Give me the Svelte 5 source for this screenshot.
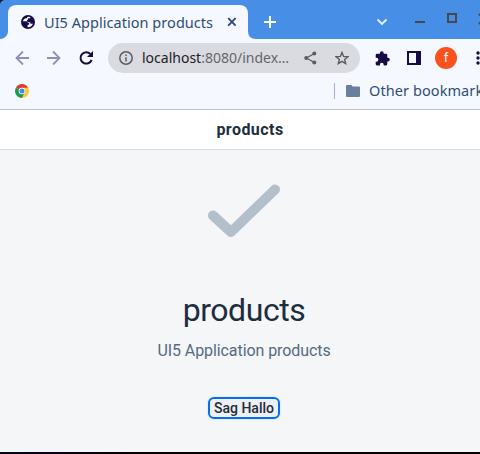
<script>
  const title = 'UI5 Application products';
  const name = 'products';
</script>

<div class="window">
  <div class="tabstrip">
    <div class="tab">
      <svg class="globe" width="14" height="14" viewBox="0 0 14 14">
        <circle cx="7" cy="7" r="7" fill="#180a45" />
        <path d="M1.800 6.200h3.400q1.500 0 1.700 1.500h1.300v2.100H6.600v2.400c2.500.2 4.600-1.300 5.300-3.500H10q-.8 0-.8-1.500-3.100.3-3.400-1.100-.1-1.200 1.300-1.500V3.200h2.100V2.100Q7.600 1.500 6.200 1.900V3.200H4.400Q2.400 4 1.800 6.200Z" fill="#f5f9ff" />
      </svg>
      <span class="tabtitle">{title}</span>
      <svg class="close" width="10" height="10" viewBox="0 0 10 10"><path d="M1.200 1.200l7.400 7.400M8.600 1.200L1.200 8.600" stroke="#2a4a73" stroke-width="1.900" /></svg>
    </div>
    <svg class="flare" width="8" height="8" viewBox="0 0 8 8"><path d="M0 0Q0 8 8 8H0Z" fill="#f5f9ff" /></svg>
    <svg class="plus" width="12" height="12" viewBox="0 0 12 12"><path d="M6 0v12M0 6h12" stroke="#fff" stroke-width="2" /></svg>
    <svg class="chev" width="12" height="8" viewBox="0 0 12 8"><path d="M1.500 1.500L6 6l4.500-4.500" fill="none" stroke="#e9f2ff" stroke-width="1.800" /></svg>
    <svg class="controls" width="65" height="12" viewBox="0 0 65 12" fill="none" stroke="#48484a" stroke-width="2">
      <path d="M0 9h10M64 1l10 10M64 11L74 1" /><rect x="33" y="1" width="8" height="8" />
    </svg>
  </div>

  <div class="toolbar">
    <svg class="nav" width="84" height="16" viewBox="0 0 84 16" fill="none" stroke="#918fb3" stroke-width="1.800">
      <path d="M14 8H1.500M8 1.500L1.500 8 8 14.500M32 8h12.500M38 1.500L44.500 8 38 14.500" />
      <g stroke="#180a45" stroke-width="2"><path d="M75.500 4.100A5.700 5.700 0 1 0 76.600 9.800" /></g>
      <path d="M78 1v6h-6z" fill="#180a45" stroke="none" />
    </svg>
    <div class="address">
      <svg width="14" height="14" viewBox="0 0 14 14"><circle cx="7" cy="7" r="6.200" fill="none" stroke="#5b5c60" stroke-width="1.500" /><path d="M7 6.200v4.300M7 3.400v1.500" stroke="#5b5c60" stroke-width="1.500" /></svg>
      <span class="url"><b>localhost</b>:8080/index…</span>
      <svg class="share" width="13" height="14" viewBox="0 0 13 14"><path d="M10.500 2.500L2.300 7l8.200 4.500" fill="none" stroke="#5b5c60" stroke-width="1.300" /><g fill="#5b5c60"><circle cx="10.300" cy="2.500" r="2" /><circle cx="2.200" cy="7" r="2" /><circle cx="10.300" cy="11.500" r="2" /></g></svg>
      <svg class="star" width="14" height="14" viewBox="0 0 14 14"><path d="M7 1.400l1.600 4 4.300.3-3.300 2.700 1.100 4.200L7 10.300l-3.700 2.300 1.100-4.200L1.100 5.700l4.300-.3Z" fill="none" stroke="#5b5c60" stroke-width="1.400" /></svg>
    </div>
    <svg class="puzzle" width="15" height="15" viewBox="0 0 15 15"><path d="M2 2.800h2.900V2.200a1.900 1.900 0 0 1 3.800 0v.6H11q1.300 0 1.300 1.300v2.600h.6a1.900 1.900 0 0 1 0 3.800h-.6v2.600q0 1.300-1.300 1.300H8.700v-.7a1.900 1.900 0 0 0-3.800 0v.7H2q-1.300 0-1.300-1.300v-2.400h.7a1.900 1.900 0 0 0 0-3.900H.7V4.100Q.7 2.800 2 2.800z" fill="#180a45" /></svg>
    <svg class="panel" width="14" height="14" viewBox="0 0 14 14"><path d="M0 0h14v14H0zM2 2v10h7V2z" fill="#180a45" fill-rule="evenodd" /></svg>
    <div class="avatar">f</div>
    <svg class="dots" width="4" height="14" viewBox="0 0 4 14" fill="#180a45"><circle cx="2" cy="2" r="1.700" /><circle cx="2" cy="7" r="1.700" /><circle cx="2" cy="12" r="1.700" /></svg>
  </div>

  <div class="bookmarks">
    <svg class="chrome" width="14" height="14" viewBox="0 0 14 14">
      <path d="M7 7L.94 3.500A7 7 0 0 1 13.060 3.500Z" fill="#e3392c" />
      <path d="M7 7L.94 3.500A7 7 0 0 0 7 14l3-5.300Z" fill="#189c4c" />
      <path d="M7 3.800h6.200A7 7 0 0 1 7 14l2.900-5.500Z" fill="#fdcb2e" />
      <circle cx="7" cy="7" r="3.300" fill="#fff" /><circle cx="7" cy="7" r="2.500" fill="#4385f4" />
    </svg>
    <div class="other">
      <svg width="14" height="12" viewBox="0 0 14 12"><path d="M1 0h4.300l1.500 1.500H13q1 0 1 1V11q0 1-1 1H1q-1 0-1-1V1q0-1 1-1z" fill="#68809e" /></svg>
      <span>Other bookmarks</span>
    </div>
  </div>

  <header>{name}</header>
  <main>
    <svg class="check" width="74" height="56" viewBox="0 0 74 56"><path d="M6 32.500L24 49 68 6.500" fill="none" stroke="#b3bfcb" stroke-width="10" stroke-linecap="round" stroke-linejoin="round" /></svg>
    <h1>{name}</h1>
    <p>{title}</p>
    <button>Sag Hallo</button>
  </main>
  <div class="desktop"></div>
</div>

<style>
  :global(body) { overflow: hidden; background: #f4f6f8; }
  svg { display: block; flex: none; }
  .window { width: 480px; height: 454px; overflow: hidden; display: flex; flex-direction: column; font-family: Roboto, "Liberation Sans", sans-serif; }
  .window > * { flex: none; box-sizing: border-box; }
  .tabstrip { height: 39px; display: flex; align-items: flex-end; background: #478fe6; padding-left: 8px; position: relative; }
  .tabstrip::before { content: ""; position: absolute; left: 0; bottom: 0; width: 8px; height: 8px; background: radial-gradient(circle at 0 0, #478fe6 7.500px, #f5f9ff 8.500px); }
  .tabstrip::after { content: ""; position: absolute; left: 0; top: 0; width: 5px; height: 5px; background: radial-gradient(circle at 5px 5px, transparent 4.500px, #111d31 5.500px); }
  .tab { width: 240px; height: 34px; box-sizing: border-box; border-radius: 8px 8px 0 0; background: #f5f9ff; display: flex; align-items: center; padding-left: 13px; }
  .tabtitle { width: 170px; margin-left: 9px; font: 14.500px/20px "Noto Sans", sans-serif; color: #2f4d73; white-space: nowrap; letter-spacing: .04px; }
  .close { margin-left: 13px; }
  .plus { margin: 0 0 11px 8px; }
  .chev { margin: 0 0 13px 100px; }
  .controls { margin: 0 0 14px 27px; }
  .toolbar { height: 38px; background: #f5f9ff; display: flex; align-items: center; padding-left: 15px; }
  .address { width: 252px; height: 30px; box-sizing: border-box; margin-left: 9px; border-radius: 15px; background: #dadbe0; display: flex; align-items: center; padding-left: 11px; }
  .url { width: 148px; margin-left: 9px; font: 14px/20px "Noto Sans", sans-serif; color: #65666b; white-space: nowrap; }
  .url b { font-weight: 400; color: #202124; }
  .share { margin-left: 14px; }
  .star { margin-left: 18px; }
  .puzzle { margin-left: 15px; }
  .panel { margin-left: 17px; }
  .avatar { flex: none; width: 22px; height: 22px; margin-left: 14px; border-radius: 50%; background: #fb511e; color: #fff; font-size: 13px; line-height: 22px; text-align: center; }
  .dots { margin-left: 19px; }
  .bookmarks { height: 33px; background: #f5f9ff; border-bottom: 1px solid #bfc1cf; display: flex; align-items: center; padding: 0 0 5px 15px; }
  .other { margin-left: 305px; height: 16px; border-left: 1px solid #a9aecb; padding-left: 11px; display: flex; align-items: center; flex: none; font: 14.500px/20px "Noto Sans", sans-serif; color: #2f4d73; white-space: nowrap; letter-spacing: .08px; }
  .other span { margin: -1px 0 0 9px; }
  header { height: 40px; background: #fff; border-bottom: 1px solid #d9dadb; padding-left: 20px; line-height: 39px; text-align: center; font-size: 16px; font-weight: 700; letter-spacing: .45px; color: #1d2d3e; }
  main { height: 302px; background: #f4f6f8; display: flex; flex-direction: column; align-items: center; padding-left: 8px; }
  .check { margin-top: 33px; }
  h1 { margin: 50px 0 0; font-size: 32px; line-height: 42px; font-weight: 400; letter-spacing: -.45px; color: #1d2d3e; }
  p { margin: 10px 0 0; font-size: 16px; line-height: 20px; letter-spacing: -.08px; color: #556b82; }
  button { margin: 36px 0 0; width: 72px; height: 22px; box-sizing: border-box; padding: 0; border: 2px solid #0070f2; border-radius: 6px; background: #edeff0; box-shadow: 0 0 0 1px #eaecef; font: 500 14px/18px Roboto, sans-serif; color: #1d2d3e; white-space: nowrap; }
  .desktop { height: 2px; background: linear-gradient(90deg, #03031d, #000 30%); }
</style>
